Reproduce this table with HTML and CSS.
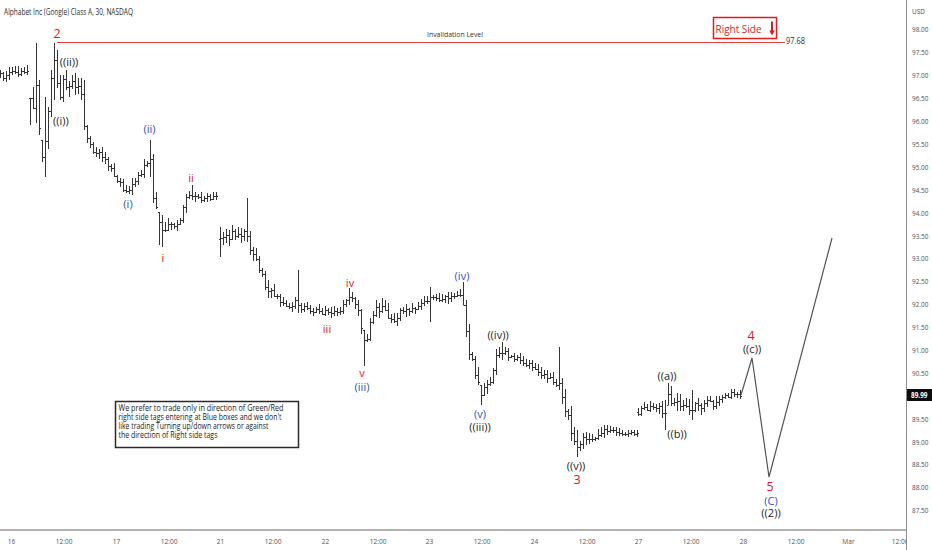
FILE: index.html
```html
<!DOCTYPE html>
<html lang="en">
<head>
<meta charset="utf-8">
<title>Alphabet Inc (Google) Class A, 30, NASDAQ</title>
<link rel="stylesheet" href="styles.css">
</head>
<body>
<div class="chart">
  <div class="pane">
    <svg class="plot" width="906" height="529" viewBox="0 0 906 529">
      <text class="title" x="4" y="14.5" textLength="129" lengthAdjust="spacingAndGlyphs">Alphabet Inc (Google) Class A, 30, NASDAQ</text>
      <line class="inval" x1="57" y1="42.5" x2="785" y2="42.5"/>
      <text class="inval-label" x="427" y="37" textLength="56" lengthAdjust="spacingAndGlyphs">Invalidation Level</text>
      <text class="level" x="786" y="43.5" textLength="19" lengthAdjust="spacingAndGlyphs">97.68</text>
      <g class="rightside">
        <rect x="713.5" y="17.5" width="63" height="21"/>
        <text x="715.5" y="32.5" textLength="46" lengthAdjust="spacingAndGlyphs">Right Side</text>
        <path class="arrow-shaft" d="M772 21.5V31"/>
        <path class="arrow-head" d="M769.3 30.5H774.7L772 35.5Z"/>
      </g>
      <path id="bars" class="bars" d=""/>
      <polyline class="proj" points="741,395 752,358 769,477 832,238"/>
      <g class="waves">
        <text class="red big" x="57" y="38">2</text>
        <text class="blk" x="69" y="65.5">((ii))</text>
        <text class="blk" x="61" y="124.5">((i))</text>
        <text class="blue" x="128" y="207.5">(i)</text>
        <text class="blue" x="149.5" y="132.5">(ii)</text>
        <text class="red" x="163" y="262">i</text>
        <text class="red" x="191" y="182">ii</text>
        <text class="red" x="327" y="333">iii</text>
        <text class="red" x="350" y="287">iv</text>
        <text class="red" x="362" y="377">v</text>
        <text class="blue" x="362" y="391">(iii)</text>
        <text class="blue" x="462" y="279.5">(iv)</text>
        <text class="blk" x="498" y="338.5">((iv))</text>
        <text class="blue" x="480" y="417.5">(v)</text>
        <text class="blk" x="480" y="431">((iii))</text>
        <text class="blk" x="576" y="469.5">((v))</text>
        <text class="red big" x="577" y="484">3</text>
        <text class="blk" x="667" y="379.5">((a))</text>
        <text class="blk" x="677" y="437.5">((b))</text>
        <text class="red big" x="751" y="340">4</text>
        <text class="blk" x="752" y="353">((c))</text>
        <text class="red big" x="770" y="491">5</text>
        <text class="blue" x="771" y="505">(C)</text>
        <text class="blk" x="771" y="517">((2))</text>
      </g>
      <g class="note">
        <rect x="115.5" y="401.5" width="183" height="46"/>
        <text x="118.5" y="411" textLength="165" lengthAdjust="spacingAndGlyphs">We prefer to trade only in direction of Green/Red</text>
        <text x="118.5" y="420" textLength="163" lengthAdjust="spacingAndGlyphs">right side tags entering at Blue boxes and we don't</text>
        <text x="118.5" y="429" textLength="150" lengthAdjust="spacingAndGlyphs">like trading Turning up/down arrows or against</text>
        <text x="118.5" y="438" textLength="99" lengthAdjust="spacingAndGlyphs">the direction of Right side tags</text>
      </g>
    </svg>
  </div>
  <div class="paxis">
    <div class="usd"><span>USD</span></div>
    <div class="plab"><span>98.00</span></div>
    <div class="plab"><span>97.50</span></div>
    <div class="plab"><span>97.00</span></div>
    <div class="plab"><span>96.50</span></div>
    <div class="plab"><span>96.00</span></div>
    <div class="plab"><span>95.50</span></div>
    <div class="plab"><span>95.00</span></div>
    <div class="plab"><span>94.50</span></div>
    <div class="plab"><span>94.00</span></div>
    <div class="plab"><span>93.50</span></div>
    <div class="plab"><span>93.00</span></div>
    <div class="plab"><span>92.50</span></div>
    <div class="plab"><span>92.00</span></div>
    <div class="plab"><span>91.50</span></div>
    <div class="plab"><span>91.00</span></div>
    <div class="plab"><span>90.50</span></div>
    <div class="plab cur"><div class="badge"><span>89.99</span></div></div>
    <div class="plab"><span>89.50</span></div>
    <div class="plab"><span>89.00</span></div>
    <div class="plab"><span>88.50</span></div>
    <div class="plab"><span>88.00</span></div>
    <div class="plab"><span>87.50</span></div>
  </div>
  <div class="taxis">
    <div class="trow">
      <div class="tlab"><span>16</span></div>
      <div class="tlab"><span>12:00</span></div>
      <div class="tlab"><span>17</span></div>
      <div class="tlab"><span>12:00</span></div>
      <div class="tlab"><span>21</span></div>
      <div class="tlab"><span>12:00</span></div>
      <div class="tlab"><span>22</span></div>
      <div class="tlab"><span>12:00</span></div>
      <div class="tlab"><span>23</span></div>
      <div class="tlab"><span>12:00</span></div>
      <div class="tlab"><span>24</span></div>
      <div class="tlab"><span>12:00</span></div>
      <div class="tlab"><span>27</span></div>
      <div class="tlab"><span>12:00</span></div>
      <div class="tlab"><span>28</span></div>
      <div class="tlab"><span>12:00</span></div>
      <div class="tlab"><span>Mar</span></div>
      <div class="tlab"><span>12:00</span></div>
    </div>
  </div>
  <div class="corner"></div>
</div>
<script src="script.js"></script>
</body>
</html>
```

FILE: styles.css
```css
* { box-sizing: border-box; }

body {
  margin: 0;
  background: #ffffff;
  font-family: "Open Sans", "Liberation Sans", sans-serif;
}

.chart {
  display: grid;
  grid-template-columns: 906px 26px;
  grid-template-rows: 529px 21px;
  width: 932px;
  height: 550px;
  overflow: hidden;
  background: #ffffff;
}

.pane {
  position: relative;
  overflow: hidden;
}

.plot {
  display: block;
}

.title {
  font-family: "Open Sans", "Liberation Sans", sans-serif;
  font-size: 8.5px;
  fill: #2e2e2e;
}

.inval {
  stroke: #e2423f;
  stroke-width: 1;
}

.inval-label {
  font-size: 8px;
  fill: #333333;
}

.level {
  font-size: 8.5px;
  fill: #333333;
}

.rightside rect {
  fill: #ffffff;
  stroke: #e21b1b;
  stroke-width: 1.5;
}

.rightside text {
  font-size: 11.5px;
  fill: #e21b1b;
}

.arrow-shaft {
  stroke: #e21b1b;
  stroke-width: 2;
  fill: none;
}

.arrow-head {
  fill: #e21b1b;
}

.bars {
  fill: none;
  stroke: #353535;
  stroke-width: 1;
}

.proj {
  fill: none;
  stroke: #555555;
  stroke-width: 1.2;
}

.waves text {
  font-family: "Open Sans", "Liberation Sans", sans-serif;
  font-size: 11px;
  text-anchor: middle;
}

.waves .red { fill: #e3141b; }
.waves .blue { fill: #3152c2; }
.waves .blk { fill: #1e1e1e; }
.waves .big { font-size: 12.5px; }

.note rect {
  fill: #ffffff;
  stroke: #2a2a2a;
  stroke-width: 1.5;
}

.note text {
  font-size: 8.5px;
  fill: #222222;
}

.paxis {
  border-left: 1px solid #8c8c8c;
  display: flex;
  flex-direction: column;
  padding-top: 3px;
  font-size: 8px;
  color: #4d4d4d;
}

.usd {
  height: 14.55px;
  display: flex;
  align-items: center;
  padding-left: 5px;
  flex: none;
}

.plab {
  height: 22.9px;
  display: flex;
  align-items: center;
  padding-left: 5px;
  flex: none;
  white-space: nowrap;
}

.usd span,
.plab span {
  display: inline-block;
  transform: scaleX(0.8);
  transform-origin: left center;
}

.plab.cur {
  padding-left: 0;
}

.badge {
  width: 100%;
  height: 12px;
  line-height: 12px;
  background: #0d0d0d;
  color: #ffffff;
  font-weight: 700;
  padding-left: 4px;
}

.taxis {
  border-top: 2px solid #b3b3b3;
  overflow: hidden;
}

.trow {
  display: flex;
  height: 19px;
  align-items: center;
  margin-left: -14.125px;
}

.tlab {
  flex: 0 0 52.25px;
  text-align: center;
  font-size: 8px;
  color: #555555;
  white-space: nowrap;
}

.tlab span {
  display: inline-block;
  transform: scaleX(0.82);
}

.corner {
  border-left: 1px solid #8c8c8c;
}
```

FILE: script.js
```js
(function () {
  var segs = [
    [[0,76,4],[10,74,4],[18,71,4],[28,74,5],[31,112,9],[34,105,9],[37,70,9],[40,150,7],[43,158,7],[46,125,9],[49,100,9],[53,55,9],[56,80,9],[60,92,9],[64,72,9],[68,95,9],[72,78,9],[76,92,7],[80,82,7],[83,118,7],[87,135,6],[92,148,5],[100,155,5],[106,163,5],[112,170,4],[118,182,4],[124,188,4],[128,190,4],[134,182,5],[140,172,6],[146,160,7],[150,158,7],[153,198,7],[157,212,7],[160,230,7],[163,238,7],[168,225,7],[174,228,6],[180,218,6],[184,202,6],[190,196,5],[196,199,4],[204,198,3],[212,197,3],[218,195,3]],
    [[220,240,7],[224,232,6],[230,236,6],[236,232,6],[242,236,6],[246,232,6],[250,250,6],[256,262,6],[262,278,6],[268,288,6],[274,295,5],[280,302,5],[286,306,4],[292,308,4],[296,300,4],[300,307,4],[310,310,3],[320,311,4],[330,310,4],[338,312,4],[342,306,4],[346,298,4],[350,296,4],[355,305,5],[360,318,5],[363,345,6],[367,335,6],[371,315,6],[376,310,5],[382,305,6],[388,318,6],[394,318,6],[400,312,5],[410,310,4],[420,305,4],[428,300,4],[434,298,4],[442,298,4],[450,296,4],[458,295,4],[462,300,5],[465,322,6],[468,345,7],[472,362,6],[476,375,6],[480,392,6],[484,388,5],[490,382,5],[495,360,6],[500,350,5],[504,352,4],[510,356,3],[520,360,3],[530,366,3],[540,372,4],[550,380,4],[556,384,4],[560,380,4],[563,408,7],[567,415,7],[571,430,7],[575,440,7],[578,445,6],[582,440,5],[588,442,5],[594,438,5],[600,432,5],[606,428,5],[612,432,3],[620,433,3],[628,434,3],[637,433,3]],
    [[638,412,4],[642,404,4],[648,408,4],[655,408,4],[662,410,5],[665,415,6],[668,395,7],[673,405,7],[678,400,8],[684,410,7],[690,408,6],[696,404,5],[702,406,5],[708,402,5],[714,406,5],[720,398,4],[726,396,4],[732,392,3],[738,394,3],[741,395,3]]
  ];
  var spikes = [[37,43,123],[45,97,177],[31,98,125],[53,43,100],[41,140,162],[83,80,130],[150,140,177],[160,212,245],[163,215,247],[191,185,200],[220,227,257],[246,198,242],[297,270,313],[350,288,305],[364,330,366],[429,287,322],[462,282,305],[481,385,405],[502,342,360],[560,347,390],[578,430,457],[665,400,430],[669,383,405],[693,390,420]];
  var seed = 12345;
  function rnd() {
    seed = (seed * 1664525 + 1013904223) >>> 0;
    return seed / 4294967296;
  }
  function interp(pts, x) {
    for (var i = 0; i < pts.length - 1; i++) {
      var a = pts[i], b = pts[i + 1];
      if (x >= a[0] && x <= b[0]) {
        var t = (x - a[0]) / (b[0] - a[0] || 1);
        return [a[1] + (b[1] - a[1]) * t, a[2] + (b[2] - a[2]) * t];
      }
    }
    var l = pts[pts.length - 1];
    return [l[1], l[2]];
  }
  function clamp(v, lo, hi) { return Math.max(lo, Math.min(hi, v)); }
  function r(v) { return Math.round(v) + 0.5; }
  var d = '';
  segs.forEach(function (pts) {
    var x0 = pts[0][0], x1 = pts[pts.length - 1][0];
    var prev = null;
    for (var x = x0; x <= x1 + 0.01; x += 3) {
      var p = interp(pts, x);
      var t = p[0], v = p[1];
      var o = prev === null ? t + (rnd() - 0.5) * 3 : prev;
      var c = t + (rnd() - 0.5) * v * 1.4;
      var hi = Math.min(o, c) - rnd() * v * 1.1 - 1;
      var lo = Math.max(o, c) + rnd() * v * 1.1 + 1;
      for (var k = 0; k < spikes.length; k++) {
        var s = spikes[k];
        if (Math.abs(s[0] - x) < 1.5) {
          hi = s[1]; lo = s[2];
          o = clamp(o, hi, lo); c = clamp(c, hi, lo);
        }
      }
      var X = x + 0.5;
      d += 'M' + X + ' ' + Math.round(hi) + 'V' + Math.round(lo) +
           'M' + (X - 1.5) + ' ' + r(o) + 'H' + X +
           'M' + X + ' ' + r(c) + 'H' + (X + 1.5);
      prev = c;
    }
  });
  document.getElementById('bars').setAttribute('d', d);
})();
```
